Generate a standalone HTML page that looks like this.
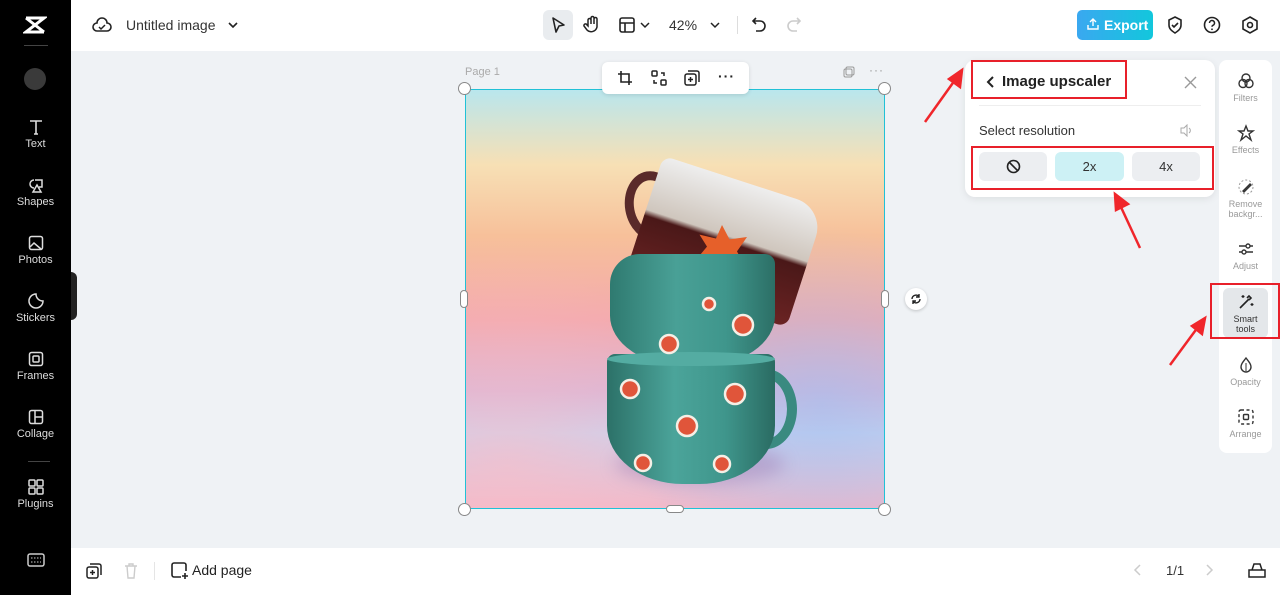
<!DOCTYPE html><html><head><style>
*{box-sizing:border-box;margin:0;padding:0}
body{width:1280px;height:595px;overflow:hidden;background:#eff2f5;font-family:"Liberation Sans",sans-serif;position:relative;color:#222}
.abs{position:absolute}
.sb{left:0;top:0;width:71px;height:595px;background:#000}
.si{position:absolute;left:0;width:71px;text-align:center;color:#ddd;font-size:11px}
.si svg{display:block;margin:0 auto 2px}
.top{left:71px;top:0;width:1209px;height:51px;background:#fff}
.bot{left:71px;top:548px;width:1209px;height:47px;background:#fff}
.rp{left:1219px;top:60px;width:53px;height:393px;background:#fff;border-radius:8px}
.ri{position:absolute;left:0;width:53px;text-align:center;font-size:9px;color:#999;line-height:10px}
.ri svg{display:block;margin:0 auto 3px}
.red{position:absolute;border:2px solid #e8202a}
</style></head><body>
<div class="abs sb">
<svg class="abs" style="left:23px;top:15px" width="24" height="20" viewBox="0 0 24 20"><path d="M3 3h18L3 17h18M3 3l18 14" stroke="#fff" stroke-width="3" fill="none"/></svg>
<div class="abs" style="left:24px;top:45px;width:24px;height:1px;background:#444"></div>
<div class="abs" style="left:24px;top:68px;width:22px;height:22px;border-radius:50%;background:#3a3a3a"></div>
<div class="si" style="top:118px"><svg width="18" height="18" viewBox="0 0 18 18"><path d="M3 3h12M9 3v13M7 16h4" stroke="#ddd" stroke-width="1.6" fill="none"/></svg>Text</div>
<div class="si" style="top:176px"><svg width="18" height="18" viewBox="0 0 18 18"><path d="M7 4a4 4 0 1 0 0 8M8 4h7v7h-3M6 16l4-7 4 7z" stroke="#ddd" stroke-width="1.5" fill="none"/></svg>Shapes</div>
<div class="si" style="top:234px"><svg width="18" height="18" viewBox="0 0 18 18"><rect x="2.5" y="2.5" width="13" height="13" rx="2" stroke="#ddd" stroke-width="1.5" fill="none"/><path d="M3 13l4-4 7 6" stroke="#ddd" stroke-width="1.5" fill="none"/></svg>Photos</div>
<div class="si" style="top:292px"><svg width="18" height="18" viewBox="0 0 18 18"><path d="M9 2a7 7 0 1 0 7 7c-4 0-7-3-7-7z" stroke="#ddd" stroke-width="1.5" fill="none"/></svg>Stickers</div>
<div class="si" style="top:350px"><svg width="18" height="18" viewBox="0 0 18 18"><rect x="2.5" y="2.5" width="13" height="13" rx="2" stroke="#ddd" stroke-width="1.5" fill="none"/><rect x="6" y="6" width="6" height="6" rx="1" stroke="#ddd" stroke-width="1.5" fill="none"/></svg>Frames</div>
<div class="si" style="top:408px"><svg width="18" height="18" viewBox="0 0 18 18"><rect x="2.5" y="2.5" width="13" height="13" rx="2" stroke="#ddd" stroke-width="1.5" fill="none"/><path d="M8 3v12M8 9h7" stroke="#ddd" stroke-width="1.5"/></svg>Collage</div>
<div class="abs" style="left:28px;top:461px;width:22px;height:1px;background:#444"></div>
<div class="si" style="top:478px"><svg width="18" height="18" viewBox="0 0 18 18"><g stroke="#ddd" stroke-width="1.5" fill="none"><rect x="2" y="2" width="6" height="6" rx="1"/><rect x="10" y="2" width="6" height="6" rx="1"/><rect x="2" y="10" width="6" height="6" rx="1"/><rect x="10" y="10" width="6" height="6" rx="1"/></g></svg>Plugins</div>
<svg class="abs" style="left:27px;top:553px" width="18" height="14" viewBox="0 0 18 14"><rect x="1" y="1" width="16" height="12" rx="2" stroke="#ccc" stroke-width="1.5" fill="none"/><path d="M4 5h10M4 9h10" stroke="#ccc" stroke-dasharray="1.5 1.5"/></svg>
</div>
<div class="abs" style="left:71px;top:272px;width:6px;height:48px;background:#222;border-radius:0 6px 6px 0"></div>

<div class="abs top">
<svg class="abs" style="left:21px;top:17px" width="20" height="16" viewBox="0 0 20 16"><path d="M5 14a4 4 0 0 1 0-8 5 5 0 0 1 10 0 4 4 0 0 1 0 8z" stroke="#222" stroke-width="1.6" fill="none"/><path d="M7 10l2 2 4-4" stroke="#222" stroke-width="1.5" fill="none"/></svg>
<div class="abs" style="left:55px;top:17px;font-size:14px;color:#333">Untitled image</div>
<svg class="abs" style="left:157px;top:21px" width="10" height="8"><path d="M1 2l4 4 4-4" stroke="#222" stroke-width="1.6" fill="none"/></svg>
<div class="abs" style="left:472px;top:10px;width:30px;height:30px;background:#e9ecef;border-radius:6px"></div>
<svg class="abs" style="left:479px;top:16px" width="16" height="18"><path d="M3 2l11 7-5 1-3 6z" stroke="#222" stroke-width="1.6" fill="none" stroke-linejoin="round"/></svg>
<svg class="abs" style="left:512px;top:15px" width="18" height="20"><path d="M5 11V5a1.5 1.5 0 0 1 3 0v4V3a1.5 1.5 0 0 1 3 0v6V4a1.5 1.5 0 0 1 3 0v8a6 6 0 0 1-10 3l-3-4a1.5 1.5 0 0 1 3-1z" stroke="#222" stroke-width="1.5" fill="none"/></svg>
<svg class="abs" style="left:548px;top:17px" width="16" height="16"><rect x="1" y="1" width="14" height="14" rx="2" stroke="#222" stroke-width="1.6" fill="none"/><path d="M1 6h14M6 6v9" stroke="#222" stroke-width="1.6"/></svg>
<svg class="abs" style="left:569px;top:21px" width="10" height="8"><path d="M1 2l4 4 4-4" stroke="#222" stroke-width="1.5" fill="none"/></svg>
<div class="abs" style="left:598px;top:17px;font-size:14px;color:#333">42%</div>
<svg class="abs" style="left:639px;top:21px" width="10" height="8"><path d="M1 2l4 4 4-4" stroke="#222" stroke-width="1.5" fill="none"/></svg>
<div class="abs" style="left:666px;top:16px;width:1px;height:18px;background:#ddd"></div>
<svg class="abs" style="left:680px;top:16px" width="16" height="17"><path d="M5 2L2 5l3 3M2 5h7a5 5 0 0 1 0 10H5" stroke="#222" stroke-width="1.6" fill="none"/></svg>
<svg class="abs" style="left:715px;top:16px" width="16" height="17"><path d="M11 2l3 3-3 3M14 5H7a5 5 0 0 0 0 10h4" stroke="#ccc" stroke-width="1.6" fill="none"/></svg>
<div class="abs" style="left:1006px;top:10px;width:76px;height:30px;border-radius:5px;background:linear-gradient(90deg,#3aa8f0,#12c7dc);color:#fff;font-weight:bold;font-size:14px;line-height:30px;padding-left:27px">Export</div>
<svg class="abs" style="left:1015px;top:17px" width="14" height="14"><path d="M2 8v4h10V8M7 9V2M4 5l3-3 3 3" stroke="#fff" stroke-width="1.4" fill="none"/></svg>
<svg class="abs" style="left:1096px;top:16px" width="16" height="18"><path d="M8 1l6 3v5c0 4-3 6-6 8-3-2-6-4-6-8V4z" stroke="#222" stroke-width="1.6" fill="none"/><path d="M5 9l2 2 4-4" stroke="#222" stroke-width="1.6" fill="none"/></svg>
<svg class="abs" style="left:1132px;top:16px" width="18" height="18"><circle cx="9" cy="9" r="7.5" stroke="#222" stroke-width="1.6" fill="none"/><path d="M6.5 7a2.5 2.5 0 1 1 3.5 2.3c-.7.3-1 .8-1 1.5" stroke="#222" stroke-width="1.5" fill="none"/><circle cx="9" cy="13.3" r=".9" fill="#222"/></svg>
<svg class="abs" style="left:1170px;top:16px" width="18" height="18"><path d="M9 1l7 4v8l-7 4-7-4V5z" stroke="#222" stroke-width="1.6" fill="none"/><circle cx="9" cy="9" r="2.5" stroke="#222" stroke-width="1.6" fill="none"/></svg>
</div>

<div class="abs" style="left:465px;top:66px;font-size:11px;color:#aaa">Page 1</div>
<svg class="abs" style="left:843px;top:66px" width="12" height="12"><rect x="1" y="3" width="8" height="8" rx="1.5" stroke="#999" fill="none"/><rect x="3" y="1" width="8" height="8" rx="1.5" stroke="#999" fill="none"/></svg>
<div class="abs" style="left:869px;top:63px;font-size:12px;color:#999;letter-spacing:1px">···</div>

<!-- image -->
<div class="abs" style="left:465px;top:89px;width:420px;height:420px;overflow:hidden;background:linear-gradient(180deg,#b8e6ee 0%,#f7e0b5 18%,#f7c09a 35%,#f3a9ad 55%,#d8b5d6 72%,#c9d2ef 82%,#f2b8c8 100%)">
<div class="abs" style="left:0;top:0;width:420px;height:420px;background:radial-gradient(ellipse at 85% 75%,rgba(160,190,240,.6),transparent 40%),radial-gradient(ellipse at 10% 90%,rgba(250,190,200,.6),transparent 40%)"></div>
<div class="abs" style="left:150px;top:355px;width:170px;height:40px;border-radius:50%;background:rgba(150,110,170,.35);filter:blur(8px)"></div>
<!-- top mug -->
<div class="abs" style="left:160px;top:82px;width:55px;height:70px;border:9px solid #5a2a2a;border-radius:50%;transform:rotate(-10deg)"></div>
<div class="abs" style="left:175px;top:90px;width:170px;height:125px;background:linear-gradient(180deg,#eee,#cfc6bd 45%,#4a1818 50%,#6b2323);border-radius:10px 30px 10px 10px;transform:rotate(18deg)"></div>
<div class="abs" style="left:232px;top:136px;width:50px;height:48px;background:#e6602a;clip-path:polygon(50% 0,65% 30%,100% 25%,80% 55%,95% 85%,55% 75%,40% 100%,35% 72%,0 70%,20% 45%,5% 20%,38% 28%)"></div>
<!-- middle mug -->
<div class="abs" style="left:145px;top:165px;width:165px;height:112px;background:linear-gradient(90deg,#2f7a70,#49a096 40%,#3f968c 70%,#2c6f66);border-radius:30px 10px 45% 45%"></div>
<!-- bottom mug -->
<div class="abs" style="left:270px;top:280px;width:62px;height:80px;border:10px solid #3a8a80;border-radius:50%"></div>
<div class="abs" style="left:142px;top:265px;width:168px;height:130px;background:linear-gradient(90deg,#2c7168,#4ba49a 40%,#3f968c 70%,#2a6b62);border-radius:8px 8px 45% 45%"></div>
<div class="abs" style="left:142px;top:263px;width:168px;height:14px;border-radius:50%;background:#54aca2"></div>
<svg class="abs" style="left:0;top:0" width="420" height="420"><g fill="#e0553a" stroke="#f5efe6" stroke-width="2.5"><circle cx="278" cy="236" r="10"/><circle cx="204" cy="255" r="9"/><circle cx="244" cy="215" r="6"/><circle cx="165" cy="300" r="9"/><circle cx="222" cy="337" r="10"/><circle cx="270" cy="305" r="10"/><circle cx="178" cy="374" r="8"/><circle cx="257" cy="375" r="8"/></g></svg>
</div>
<div class="abs" style="left:465px;top:89px;width:420px;height:420px;border:1.5px solid #21c1d6"></div>
<div class="abs" style="left:458px;top:82px;width:13px;height:13px;border-radius:50%;background:#fff;border:1px solid #888"></div>
<div class="abs" style="left:878px;top:82px;width:13px;height:13px;border-radius:50%;background:#fff;border:1px solid #888"></div>
<div class="abs" style="left:458px;top:503px;width:13px;height:13px;border-radius:50%;background:#fff;border:1px solid #888"></div>
<div class="abs" style="left:878px;top:503px;width:13px;height:13px;border-radius:50%;background:#fff;border:1px solid #888"></div>
<div class="abs" style="left:460px;top:290px;width:8px;height:18px;border-radius:4px;background:#fff;border:1px solid #888"></div>
<div class="abs" style="left:881px;top:290px;width:8px;height:18px;border-radius:4px;background:#fff;border:1px solid #888"></div>
<div class="abs" style="left:666px;top:505px;width:18px;height:8px;border-radius:4px;background:#fff;border:1px solid #888"></div>
<div class="abs" style="left:905px;top:288px;width:22px;height:22px;border-radius:50%;background:#fff;box-shadow:0 1px 3px rgba(0,0,0,.2)"></div>
<svg class="abs" style="left:910px;top:293px" width="12" height="12"><path d="M2 6a4 4 0 0 1 7-2.5M10 6a4 4 0 0 1-7 2.5M9 1v3H6M3 11V8h3" stroke="#222" stroke-width="1.4" fill="none"/></svg>

<!-- floating toolbar -->
<div class="abs" style="left:602px;top:62px;width:147px;height:32px;background:#fff;border-radius:6px;box-shadow:0 1px 4px rgba(0,0,0,.12)"></div>
<svg class="abs" style="left:617px;top:70px" width="16" height="16"><path d="M4 1v11h11M1 4h11v11" stroke="#222" stroke-width="1.6" fill="none"/></svg>
<svg class="abs" style="left:651px;top:70px" width="16" height="16"><g stroke="#222" stroke-width="1.5" fill="none"><rect x="1" y="1" width="5" height="5" rx="1"/><rect x="10" y="10" width="5" height="5" rx="1"/><path d="M10 3h3v3M6 13H3v-3"/></g></svg>
<svg class="abs" style="left:684px;top:70px" width="16" height="16"><g stroke="#222" stroke-width="1.5" fill="none"><rect x="1" y="4" width="11" height="11" rx="2"/><path d="M4 1h9a2 2 0 0 1 2 2v9M6.5 7v5M4 9.5h5"/></g></svg>
<div class="abs" style="left:718px;top:68px;font-size:14px;font-weight:bold;letter-spacing:1px">···</div>

<!-- upscaler panel -->
<div class="abs" style="left:965px;top:60px;width:250px;height:137px;background:#fff;border-radius:10px;box-shadow:0 2px 8px rgba(0,0,0,.08)"></div>
<svg class="abs" style="left:986px;top:75px" width="10" height="14"><path d="M7 2L2 7l5 5" stroke="#222" stroke-width="2" fill="none"/></svg>
<div class="abs" style="left:1002px;top:73px;font-size:15px;font-weight:bold">Image upscaler</div>
<svg class="abs" style="left:1184px;top:76px" width="13" height="13"><path d="M1 1l11 11M12 1L1 12" stroke="#999" stroke-width="1.4"/></svg>
<div class="abs" style="left:979px;top:105px;width:222px;height:1px;background:#eee"></div>
<div class="abs" style="left:979px;top:123px;font-size:13px;color:#333">Select resolution</div>
<svg class="abs" style="left:1180px;top:124px" width="12" height="13"><path d="M1 4h3l3-3v11l-3-3H1z" stroke="#aaa" fill="none"/><path d="M9 4a3 3 0 0 1 0 5" stroke="#aaa" fill="none"/></svg>
<div class="abs" style="left:979px;top:152px;width:68px;height:29px;background:#eceef1;border-radius:6px"></div>
<svg class="abs" style="left:1006px;top:159px" width="15" height="15"><circle cx="7.5" cy="7.5" r="6" stroke="#222" stroke-width="1.6" fill="none"/><path d="M3.5 3.5l8 8" stroke="#222" stroke-width="1.6"/></svg>
<div class="abs" style="left:1055px;top:152px;width:69px;height:29px;background:#cdf1f5;border-radius:6px;text-align:center;line-height:29px;font-size:13px;color:#333">2x</div>
<div class="abs" style="left:1132px;top:152px;width:68px;height:29px;background:#eceef1;border-radius:6px;text-align:center;line-height:29px;font-size:13px;color:#333">4x</div>
<div class="red" style="left:971px;top:60px;width:156px;height:39px"></div>
<div class="red" style="left:971px;top:146px;width:243px;height:44px"></div>

<!-- right panel -->
<div class="abs rp">
<div class="ri" style="top:12px"><svg width="18" height="18"><g stroke="#333" stroke-width="1.4" fill="none"><circle cx="9" cy="6" r="4"/><circle cx="6" cy="11.5" r="4"/><circle cx="12" cy="11.5" r="4"/></g></svg>Filters</div>
<div class="ri" style="top:64px"><svg width="18" height="18"><path d="M9 2l2 5h5l-4 3 2 6-5-4-5 4 2-6-4-3h5z" stroke="#333" stroke-width="1.4" fill="none"/></svg>Effects</div>
<div class="ri" style="top:118px"><svg width="18" height="18"><circle cx="9" cy="9" r="7" stroke="#999" stroke-dasharray="2 2" fill="none"/><path d="M6 13l7-7 1 1-7 7z" stroke="#333" stroke-width="1.4" fill="none"/></svg>Remove<br>backgr...</div>
<div class="ri" style="top:180px"><svg width="18" height="18"><g stroke="#333" stroke-width="1.4" fill="none"><path d="M2 6h14M2 12h14"/><circle cx="11" cy="6" r="2" fill="#fff"/><circle cx="7" cy="12" r="2" fill="#fff"/></g></svg>Adjust</div>
<div class="abs" style="left:4px;top:228px;width:45px;height:50px;background:#e4e7ea;border-radius:6px"></div>
<div class="ri" style="top:233px;color:#333"><svg width="18" height="18"><path d="M3 15l9-9M10 5l2-2 2 2-2 2" stroke="#222" stroke-width="1.6" fill="none"/><path d="M6 2v3M4.5 3.5h3M15 10v3M13.5 11.5h3" stroke="#222" stroke-width="1.2"/></svg>Smart<br>tools</div>
<div class="ri" style="top:296px"><svg width="18" height="18"><path d="M9 2c3 4 5 6 5 9a5 5 0 0 1-10 0c0-3 2-5 5-9z" stroke="#333" stroke-width="1.4" fill="none"/><path d="M9 7v8" stroke="#333"/></svg>Opacity</div>
<div class="ri" style="top:348px"><svg width="18" height="18"><rect x="2" y="2" width="14" height="14" rx="2" stroke="#333" stroke-width="1.4" stroke-dasharray="3 2.5" fill="none"/><rect x="6.5" y="6.5" width="5" height="5" rx="1" stroke="#333" stroke-width="1.4" fill="none"/></svg>Arrange</div>
</div>
<div class="red" style="left:1210px;top:283px;width:70px;height:56px"></div>

<!-- arrows -->
<svg class="abs" style="left:0;top:0" width="1280" height="595"><g stroke="#f0262b" stroke-width="2.5" fill="#f0262b">
<path d="M925 122L955 80"/><path d="M962 70l-2 17-11-8z"/>
<path d="M1140 248L1120 205"/><path d="M1115 194l13 10-12 6z"/>
<path d="M1170 365L1198 327"/><path d="M1205 318l-3 16-10-8z"/></g></svg>

<!-- bottom bar -->
<div class="abs bot">
<svg class="abs" style="left:15px;top:15px" width="16" height="16"><g stroke="#222" stroke-width="1.5" fill="none"><rect x="1" y="4" width="11" height="11" rx="2"/><path d="M4 1h9a2 2 0 0 1 2 2v9M6.5 7v5M4 9.5h5"/></g></svg>
<svg class="abs" style="left:53px;top:15px" width="14" height="16"><path d="M1 3h12M5 3V1h4v2M3 3l1 12h6l1-12" stroke="#ccc" stroke-width="1.4" fill="none"/></svg>
<div class="abs" style="left:83px;top:14px;width:1px;height:18px;background:#e5e5e5"></div>
<svg class="abs" style="left:100px;top:14px" width="18" height="18"><path d="M10 15H3a2 2 0 0 1-2-2V3a2 2 0 0 1 2-2h10a2 2 0 0 1 2 2v6M14 11v6M11 14h6" stroke="#222" stroke-width="1.6" fill="none"/></svg>
<div class="abs" style="left:121px;top:14px;font-size:14px;color:#222">Add page</div>
<svg class="abs" style="left:1062px;top:15px" width="10" height="14"><path d="M7 2L2 7l5 5" stroke="#ccc" stroke-width="1.5" fill="none"/></svg>
<div class="abs" style="left:1095px;top:15px;font-size:13px;color:#333">1/1</div>
<svg class="abs" style="left:1133px;top:15px" width="10" height="14"><path d="M3 2l5 5-5 5" stroke="#ccc" stroke-width="1.5" fill="none"/></svg>
<svg class="abs" style="left:1177px;top:14px" width="18" height="16"><path d="M1 8h16v7H1zM4 8l2-6h6l2 6" stroke="#222" stroke-width="1.5" fill="none"/></svg>
</div>
</body></html>
